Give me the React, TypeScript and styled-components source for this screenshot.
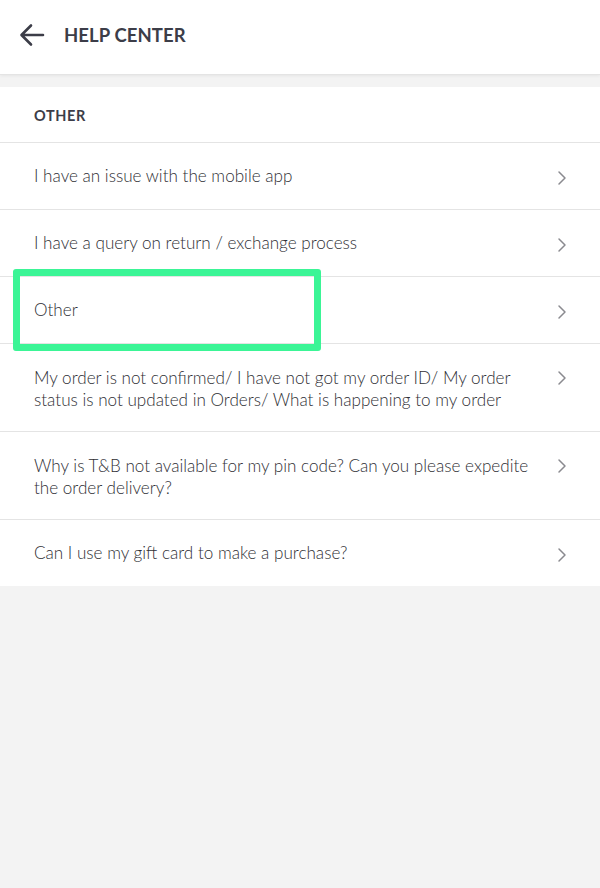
import React from 'react'
import styled, { createGlobalStyle } from 'styled-components'

const GlobalStyle = createGlobalStyle`
  html, body {
    margin: 0;
    padding: 0;
    background: #f3f3f3;
  }
  body {
    font-family: Lato, "Open Sans", sans-serif;
    -webkit-font-smoothing: antialiased;
  }
`

const Page = styled.div`
  position: relative;
  width: 600px;
  min-height: 888px;
  background: #f3f3f3;
`

const Header = styled.header`
  height: 75px;
  background: #fff;
  display: flex;
  align-items: center;
  padding: 0 0 5px 19px;
  box-sizing: border-box;
  border-bottom: 1px solid #e4e4e4;
  box-shadow: 0 1px 3px rgba(0, 0, 0, 0.06);
`

const BackButton = styled.button`
  width: 26px;
  height: 26px;
  padding: 0;
  margin: 0 19px 0 0;
  border: 0;
  background: none;
  display: flex;
  align-items: center;
  justify-content: center;
`

const Title = styled.h1`
  margin: 0;
  font-size: 18.5px;
  font-weight: 700;
  color: #3c3d48;
  letter-spacing: 0.1px;
`

const Card = styled.section`
  margin-top: 12px;
  background: #fff;
`

const SectionTitle = styled.div`
  height: 56px;
  box-sizing: border-box;
  display: flex;
  align-items: center;
  padding: 2px 0 0 34px;
  font-size: 14.5px;
  font-weight: 700;
  letter-spacing: 0.6px;
  color: #3c3d48;
  border-bottom: 1px solid #e4e4e4;
`

const Row = styled.div<{ $tall?: boolean }>`
  display: flex;
  align-items: ${p => (p.$tall ? 'flex-start' : 'center')};
  min-height: ${p => (p.$tall ? '88px' : '67px')};
  padding: ${p => (p.$tall ? '23px 0 0 34px' : '0 0 0 34px')};
  box-sizing: border-box;
  border-bottom: 1px solid #e4e4e4;
  &:last-child {
    border-bottom: 0;
    min-height: 66px;
  }
`

const RowText = styled.span`
  flex: 1;
  max-width: 502px;
  font-size: 17.1px;
  font-weight: 300;
  line-height: 22px;
  color: #2f2f35;
`

const Chevron = styled.span`
  width: 20px;
  margin-left: auto;
  margin-right: 28px;
  display: flex;
  justify-content: center;
  padding-top: 3px;
`

const Highlight = styled.div`
  position: absolute;
  left: 13px;
  top: 269px;
  width: 308px;
  height: 82px;
  box-sizing: border-box;
  border: 7px solid #3bf596;
  border-radius: 3px;
  pointer-events: none;
`

const items: { text: string; tall?: boolean }[] = [
  { text: 'I have an issue with the mobile app' },
  { text: 'I have a query on return / exchange process' },
  { text: 'Other' },
  {
    text: 'My order is not confirmed/ I have not got my order ID/ My order status is not updated in Orders/ What is happening to my order',
    tall: true,
  },
  {
    text: 'Why is T&B not available for my pin code? Can you please expedite the order delivery?',
    tall: true,
  },
  { text: 'Can I use my gift card to make a purchase?' },
]

const ArrowLeft = () => (
  <svg width="26" height="26" viewBox="0 0 26 26" fill="none">
    <path d="M24 13H3M12 3.5L2.5 13l9.5 9.5" stroke="#3c3d48" strokeWidth="2.6" strokeLinecap="round" strokeLinejoin="round" />
  </svg>
)

const ChevronRight = () => (
  <svg width="10" height="16" viewBox="0 0 10 16" fill="none">
    <path d="M2 2l6 6-6 6" stroke="#8a8a8f" strokeWidth="1.5" strokeLinecap="round" strokeLinejoin="round" />
  </svg>
)

export default function App() {
  return (
    <>
      <GlobalStyle />
      <Page>
        <Header>
          <BackButton aria-label="Back">
            <ArrowLeft />
          </BackButton>
          <Title>HELP CENTER</Title>
        </Header>
        <Card>
          <SectionTitle>OTHER</SectionTitle>
          {items.map(item => (
            <Row key={item.text} $tall={item.tall}>
              <RowText>{item.text}</RowText>
              <Chevron>
                <ChevronRight />
              </Chevron>
            </Row>
          ))}
        </Card>
        <Highlight />
      </Page>
    </>
  )
}
